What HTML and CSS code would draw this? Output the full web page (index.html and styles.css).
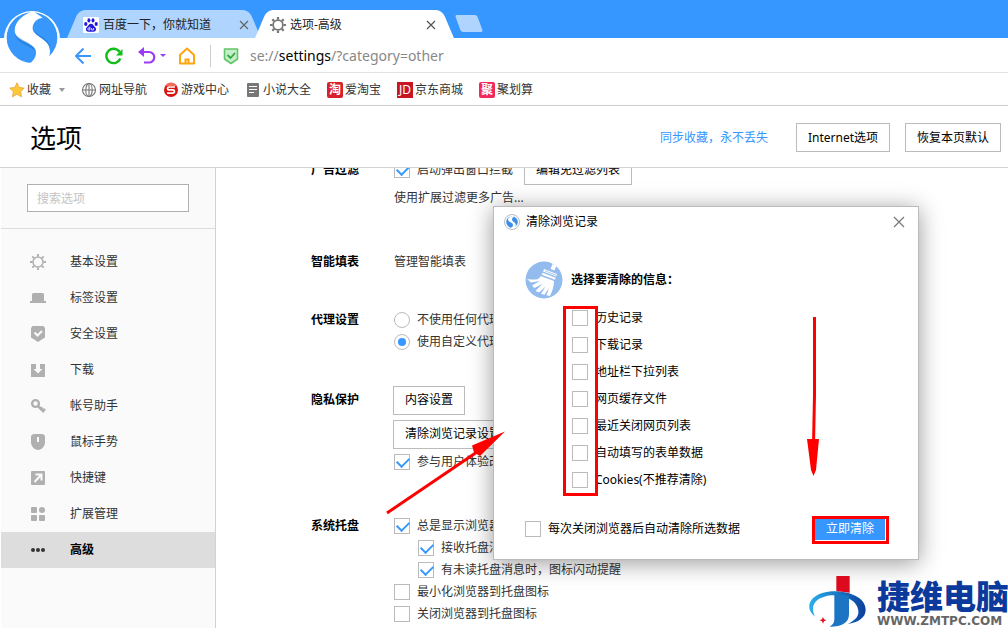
FILE: index.html
```html
<!DOCTYPE html>
<html lang="zh-CN">
<head>
<meta charset="utf-8">
<title>选项-高级</title>
<link rel="stylesheet" href="styles.css">
</head>
<body>
<div class="browser">
  <header class="chrome">
    <svg class="brand" width="64" height="64" viewBox="0 0 192 192" aria-hidden="true">
      <circle cx="96" cy="93" r="84" fill="#fff"/>
      <circle cx="96" cy="89" r="76" fill="#3797fa"/>
      <path d="M100 10C70 18 44 42 44 68c0 36 64 34 64 66 0 14-10 28-26 36h50c13-10 18-26 18-42 0-36-52-42-52-68 0-17 14-29 30-31z" fill="#fff"/>
      <path d="M44 68c0 30 64 32 64 66 0-18-66-22-64-66M98 60c0 26 52 32 52 68 6-40-46-44-52-68" fill="#1c74cf" opacity=".55"/>
    </svg>
    <div class="tabs">
      <div class="tab tab-back">
        <svg width="16" height="16" viewBox="0 0 16 16"><rect width="16" height="16" rx="1" fill="#fff"/><g fill="#2319dc"><ellipse cx="2.8" cy="7" rx="1.6" ry="2.1"/><ellipse cx="5.9" cy="3.4" rx="1.5" ry="2.1"/><ellipse cx="10" cy="3.4" rx="1.5" ry="2.1"/><ellipse cx="13.2" cy="7" rx="1.6" ry="2.1"/><path d="M8 6.8c2 0 2.6 2 4 3.3 1.8 1.6 1.300 4.600-1.200 4.600H5.200c-2.500 0-3-3-1.200-4.600C5.400 8.800 6 6.800 8 6.800z"/></g><path d="M6.900 9.800v3.200H5.700a1 1 0 0 1 0-2h1.200M8.600 11v2h2v-2" stroke="#fff" stroke-width=".8" fill="none"/></svg>
        <span class="tab-name">百度一下，你就知道</span>
        <button class="x-btn" aria-label="关闭标签"><svg width="10" height="10" viewBox="0 0 10 10"><path d="M1 1l8 8M9 1L1 9" stroke="#666" stroke-width="1.200"/></svg></button>
      </div>
      <div class="tab tab-front">
        <svg width="16" height="16" viewBox="0 0 16 16" fill="none" stroke="#777"><circle cx="8" cy="8" r="4.900" stroke-width="1.800"/><path d="M8 0v2.500M8 13.500V16M0 8h2.500M13.500 8H16M2.300 2.300l1.800 1.800M11.900 11.900l1.800 1.800M2.300 13.700l1.800-1.800M11.900 4.100l1.800-1.800" stroke-width="2.200"/></svg>
        <span class="tab-name">选项-高级</span>
        <button class="x-btn" aria-label="关闭标签"><svg width="10" height="10" viewBox="0 0 10 10"><path d="M1 1l8 8M9 1L1 9" stroke="#555" stroke-width="1.200"/></svg></button>
      </div>
      <button class="new-tab" aria-label="新建标签"></button>
    </div>
    <nav class="toolbar">
      <button class="tool" aria-label="后退"><svg width="18" height="18" viewBox="0 0 18 18" fill="none" stroke="#3a96fb" stroke-width="2"><path d="M17 9H2.500M9.500 1.500L2 9l7.500 7.500"/></svg></button>
      <button class="tool" aria-label="刷新"><svg width="20" height="18" viewBox="0 0 20 18" fill="none"><path d="M16.300 11.500A7.200 7.200 0 1 1 15.600 5" stroke="#12bd1c" stroke-width="2.400"/><path d="M18.500 2v6.500H12z" fill="#12bd1c"/></svg></button>
      <button class="tool tool-undo" aria-label="撤销"><svg width="28" height="18" viewBox="0 0 28 18"><path d="M4 5h7a5 5 0 0 1 0 10.500H6" fill="none" stroke="#9b3bf2" stroke-width="2.200"/><path d="M0 5l6-5v10z" fill="#9b3bf2"/><path d="M22 7h6l-3 3z" fill="#9b3bf2"/></svg></button>
      <button class="tool" aria-label="主页"><svg width="18" height="18" viewBox="0 0 18 18" fill="none" stroke="#ffa60f" stroke-width="2"><path d="M2 16.500V8L9 1.500 16 8v8.500z" stroke-linejoin="round"/><path d="M7.500 16v-3.500h3V16"/></svg></button>
      <span class="divider"></span>
      <svg width="16" height="18" viewBox="0 0 16 18"><path d="M1.500 2h13v10L8 16.500 1.500 12z" fill="#c4efc8" stroke="#62c56a" stroke-width="1.600" stroke-linejoin="round"/><path d="M4.500 8l3 3 4.500-5" fill="none" stroke="#2fa844" stroke-width="1.800"/></svg>
      <span class="url">se://<b>settings</b>/?category=other</span>
    </nav>
    <nav class="bookmarks">
      <a class="mark" href="#"><svg width="16" height="16" viewBox="0 0 16 16"><path d="M8 .8l2.200 4.700 5.100.6-3.700 3.600.9 5.100L8 12.300l-4.500 2.500.9-5.100L.7 6.100l5.100-.6z" fill="#ffc83a" stroke="#e3a33a" stroke-width=".8"/></svg>收藏<svg class="drop" width="6" height="4" viewBox="0 0 6 4"><path d="M0 0h6L3 4z" fill="#999"/></svg></a>
      <a class="mark" href="#"><svg width="16" height="16" viewBox="0 0 16 16" fill="none" stroke="#777" stroke-width="1.100"><circle cx="8" cy="8" r="6.500"/><ellipse cx="8" cy="8" rx="3.200" ry="6.500"/><path d="M8 1.300v13.400M1.300 8h13.400"/></svg>网址导航</a>
      <a class="mark" href="#"><svg width="16" height="16" viewBox="0 0 16 16"><circle cx="8" cy="8" r="7" fill="#d8150f"/><path d="M2 4a7 7 0 0 1 12 0" fill="#f26a5a"/><path d="M12 5H6.500c-2.600 0-2.600 2.900 0 2.900h3c2.600 0 2.600 3.200 0 3.200H4" fill="none" stroke="#fff" stroke-width="1.700"/></svg>游戏中心</a>
      <a class="mark" href="#"><svg width="16" height="16" viewBox="0 0 16 16"><rect x="2" y="1" width="12" height="14" rx="1" fill="#777"/><path d="M4 4.500h8M4 7.500h8M4 10.500h5" stroke="#fff" stroke-width="1.200"/></svg>小说大全</a>
      <a class="mark" href="#"><span class="site site-tao">淘</span>爱淘宝</a>
      <a class="mark" href="#"><span class="site site-jd">JD</span>京东商城</a>
      <a class="mark" href="#"><span class="site site-ju">聚</span>聚划算</a>
    </nav>
  </header>

  <header class="page-head">
    <h1>选项</h1>
    <a class="sync" href="#">同步收藏，永不丢失</a>
    <button class="btn">Internet选项</button>
    <button class="btn">恢复本页默认</button>
  </header>

  <div class="page">
    <aside class="side">
      <div class="search"><input type="text" placeholder="搜索选项" aria-label="搜索选项"></div>
      <nav class="menu">
        <a href="#"><svg width="16" height="16" viewBox="0 0 16 16" fill="none" stroke="#b0b0b0"><circle cx="8" cy="8" r="5" stroke-width="1.500"/><path d="M8 0v2.500M8 13.500V16M0 8h2.500M13.500 8H16M2.300 2.300l1.800 1.800M11.900 11.900l1.800 1.800M2.300 13.700l1.800-1.800M11.900 4.100l1.800-1.800" stroke-width="1.900"/></svg>基本设置</a>
        <a href="#"><svg width="16" height="16" viewBox="0 0 16 16" fill="#b0b0b0"><path d="M2 11V4.500Q2 3 3.500 3h9Q14 3 14 4.500V11h2v2H0v-2z"/></svg>标签设置</a>
        <a href="#"><svg width="16" height="16" viewBox="0 0 16 16"><path d="M1 2l1.500-2h11L15 2v9.500L8 16l-7-4.500z" fill="#b0b0b0"/><path d="M4.500 6.500l3 3 4.500-4.500" fill="none" stroke="#fafafa" stroke-width="2"/></svg>安全设置</a>
        <a href="#"><svg width="16" height="16" viewBox="0 0 16 16" fill="#b0b0b0"><path d="M1 2h5v5H3.500L8 11.500 12.500 7H10V2h5v13H1z"/></svg>下载</a>
        <a href="#"><svg width="16" height="16" viewBox="0 0 16 16"><circle cx="5.500" cy="5.500" r="3.400" fill="none" stroke="#b0b0b0" stroke-width="2.400"/><path d="M8 8l6 6M11 11l1.500-1.500M13 13l2-2" stroke="#b0b0b0" stroke-width="2.600"/></svg>帐号助手</a>
        <a href="#"><svg width="16" height="16" viewBox="0 0 16 16"><path d="M1 3Q1 0 4.500 0h7Q15 0 15 3v5c0 4-3 8-7 8s-7-4-7-8z" fill="#b0b0b0"/><path d="M8 3v5" stroke="#fafafa" stroke-width="2"/></svg>鼠标手势</a>
        <a href="#"><svg width="16" height="16" viewBox="0 0 16 16"><rect x="1" y="1" width="14" height="14" rx="1" fill="#b0b0b0"/><path d="M5.500 4.500h6v6M11.500 4.500L4.500 12" fill="none" stroke="#fafafa" stroke-width="2"/></svg>快捷键</a>
        <a href="#"><svg width="16" height="16" viewBox="0 0 16 16" fill="#b0b0b0"><rect x="1" y="1" width="6" height="6" rx="1"/><circle cx="12" cy="4" r="3"/><rect x="1" y="9" width="6" height="6" rx="1"/><rect x="9" y="9" width="6" height="6" rx="1"/></svg>扩展管理</a>
        <a class="current" href="#"><svg width="16" height="16" viewBox="0 0 16 16" fill="#333"><circle cx="3" cy="8" r="2"/><circle cx="8" cy="8" r="2"/><circle cx="13" cy="8" r="2"/></svg>高级</a>
      </nav>
    </aside>

    <main class="content">
      <div class="scrolled">
        <section class="group">
          <h2 class="tall">广告过滤</h2>
          <div>
            <div class="row tall"><label class="opt inset"><input type="checkbox" checked>启动弹出窗口拦截</label><button class="btn">编辑免过滤列表</button></div>
            <a class="row" href="#">使用扩展过滤更多广告...</a>
          </div>
        </section>
        <section class="group group-near">
          <h2>智能填表</h2>
          <div><a class="row" href="#">管理智能填表</a></div>
        </section>
        <section class="group group-close">
          <h2>代理设置</h2>
          <div>
            <label class="opt row"><input type="radio" name="proxy">不使用任何代理</label>
            <label class="opt row"><input type="radio" name="proxy" checked>使用自定义代理</label>
          </div>
        </section>
        <section class="group">
          <h2 class="tall">隐私保护</h2>
          <div>
            <div class="row tall"><button class="btn">内容设置</button></div>
            <div class="row tall"><button class="btn">清除浏览记录设置</button></div>
            <label class="opt row"><input type="checkbox" checked>参与用户体验改善计划</label>
          </div>
        </section>
        <section class="group">
          <h2>系统托盘</h2>
          <div>
            <label class="opt row"><input type="checkbox" checked>总是显示浏览器托盘图标</label>
            <label class="opt row nested"><input type="checkbox" checked>接收托盘消息</label>
            <label class="opt row nested"><input type="checkbox" checked>有未读托盘消息时，图标闪动提醒</label>
            <label class="opt row"><input type="checkbox">最小化浏览器到托盘图标</label>
            <label class="opt row"><input type="checkbox">关闭浏览器到托盘图标</label>
          </div>
        </section>
      </div>
    </main>
  </div>

  <section class="dialog" role="dialog" aria-labelledby="dlg-name">
    <div class="dlg-bar">
      <svg width="16" height="16" viewBox="0 0 16 16"><circle cx="8" cy="8" r="7.500" fill="#fff" stroke="#b9bcc2"/><circle cx="8" cy="8" r="5.800" fill="#3b8ee8"/><path d="M8.500 2C5.500 2.500 4 4 4 5.600 4 8.500 9 8.300 9 11c0 1.200-.8 2.200-2 3h3.300c1-.8 1.500-2 1.500-3.200C11.800 8 8 7.500 8 5.400 8 4 9 3.200 10.300 3z" fill="#fff"/></svg>
      <span id="dlg-name">清除浏览记录</span>
      <button class="x-btn" aria-label="关闭"><svg width="12" height="12" viewBox="0 0 12 12"><path d="M1 1l10 10M11 1L1 11" stroke="#777" stroke-width="1.200"/></svg></button>
    </div>
    <div class="dlg-head">
      <svg width="38" height="38" viewBox="0 0 38 38"><circle cx="19" cy="19" r="18.500" fill="#93bbee"/><g fill="#fff"><path d="M27.500 3l4 1.500-2 5-4-1.500z"/><path d="M19 8l13 5-.8 2.600-13.200-5zM17.500 11.800l13.200 5-.7 2-13.200-5z"/><path d="M15.500 15l13.500 5c0 5-1.500 10-4 15l-3.500-.8 2.500-7.200-4.500 6.800-3.500-1 4.500-7.300-6.500 5.900-3.500-1.500 7-7.200-8 4.300-2.500-2.500 8-4.600-9 1.500-4-3.500c6 1 12.500 1.500 13.500-2.900z"/></g><path d="M20 9.900l11 4.200" stroke="#93bbee" stroke-width=".8"/></svg>
      <b>选择要清除的信息：</b>
    </div>
    <div class="choices">
      <label class="opt"><input type="checkbox">历史记录</label>
      <label class="opt"><input type="checkbox">下载记录</label>
      <label class="opt"><input type="checkbox">地址栏下拉列表</label>
      <label class="opt"><input type="checkbox">网页缓存文件</label>
      <label class="opt"><input type="checkbox">最近关闭网页列表</label>
      <label class="opt"><input type="checkbox">自动填写的表单数据</label>
      <label class="opt"><input type="checkbox">Cookies(不推荐清除)</label>
    </div>
    <div class="dlg-foot">
      <label class="opt"><input type="checkbox">每次关闭浏览器后自动清除所选数据</label>
      <button class="primary">立即清除</button>
    </div>
  </section>

  <svg class="notes" width="1008" height="628" viewBox="0 0 1008 628" aria-hidden="true">
    <g fill="none" stroke="#f00" stroke-width="3"><rect x="564.500" y="307.500" width="32" height="187"/><rect x="813.500" y="517.500" width="74" height="25"/><path d="M387 513l90-61M814.500 317v78l-1 50"/></g>
    <path d="M505 431.500L472 445.500l2 7 6 3.500zM807 439h12l-3 31-2.500 6-2.500-6z" fill="#f00"/>
  </svg>

  <div class="watermark">
    <svg width="64" height="54" viewBox="0 0 192 162">
      <defs><linearGradient id="sea" x1="0" x2="1"><stop offset="0" stop-color="#2ab0ea"/><stop offset="1" stop-color="#0b3f9e"/></linearGradient></defs>
      <path d="M24 128C-6 104 4 70 46 57c50-15 130 4 130 50 0 24-22 38-54 43 24-12 34-24 32-40C150 72 92 56 52 68 16 78 12 104 24 128z" fill="url(#sea)"/>
      <path d="M82 62l44 2v56c0 26-20 38-58 38 10-6 14-12 14-22z" fill="#1b75c4"/>
      <path d="M88 6h40v50l-40-5z" fill="#dc0a1c"/>
      <path d="M48 129l3 7 7 3-7 3-3 7-3-7-7-3 7-3z" fill="#e01020"/>
    </svg>
    <div><strong>捷维电脑</strong><span>WWW.ZMTPC.COM</span></div>
  </div>
</div>
</body>
</html>
```

FILE: styles.css
```css
* { box-sizing: border-box; }

body {
  margin: 0;
  font: 12px/22px "Noto Sans", "Noto Sans CJK SC", sans-serif;
  color: #333;
  background: #fff;
}

a { color: inherit; text-decoration: none; }
svg { flex: none; }
button, input { font: inherit; color: inherit; margin: 0; }
button { cursor: pointer; }

.browser {
  position: relative;
  display: flex;
  flex-direction: column;
  height: 100vh;
  overflow: hidden;
}

/* Browser frame */
.chrome { flex: none; }
.brand { position: absolute; left: 0; top: 8px; z-index: 2; }

.tabs {
  display: flex;
  align-items: flex-end;
  height: 38px;
  padding-left: 67px;
  background: #3597ff;
}
.tab {
  position: relative;
  z-index: 0;
  display: flex;
  align-items: center;
  gap: 4px;
  flex: 0 1 194px;
  height: 28px;
  padding: 2px 12px 0 16px;
  color: #222;
}
.tab::before, .tab::after {
  content: "";
  position: absolute;
  z-index: -1;
  top: 0;
  bottom: 0;
  background: #afd5ff;
}
.tab::before { left: 6px; right: 40%; transform: skewX(-23deg); border-top-left-radius: 6px; }
.tab::after { right: 6px; left: 40%; transform: skewX(23deg); border-top-right-radius: 6px; }
.tab-front { flex-basis: 199px; margin-left: -6px; padding: 2px 18px 0 15px; }
.tab-front::before, .tab-front::after { background: #fff; }
.tab-name { flex: 1; white-space: nowrap; }
.x-btn { display: flex; padding: 0; border: 0; background: none; }
.new-tab {
  width: 22px;
  height: 17px;
  margin: 0 0 6px 4px;
  padding: 0;
  border: 0;
  border-radius: 2px;
  background: #afd5ff;
  transform: skewX(20deg);
}

.toolbar {
  display: flex;
  align-items: center;
  height: 35px;
  padding: 2px 0 0 74px;
  border-bottom: 1px solid #e2e2e2;
}
.tool { display: flex; margin-right: 12px; padding: 0; border: 0; background: none; }
.tool-undo { margin-left: 2px; }
.divider { width: 1px; height: 22px; margin: 0 12px 0 2px; background: #ccc; }
.url { margin-left: 11px; font-size: 14px; color: #888; }
.url b { font-weight: 400; color: #000; }

.bookmarks {
  display: flex;
  align-items: center;
  gap: 16px;
  height: 33px;
  padding: 1px 0 0 9px;
  border-bottom: 1px solid #ccc;
}
.mark { display: flex; align-items: center; gap: 2px; white-space: nowrap; }
.drop { margin-left: 6px; }
.site {
  width: 16px;
  height: 16px;
  border-radius: 2px;
  font-weight: 700;
  line-height: 16px;
  text-align: center;
  color: #fff;
}
.site-tao { background: #d8202a; }
.site-jd { background: #c81623; border-radius: 0; font-weight: 400; }
.site-ju { background: #f22a5c; }

/* Settings page */
.page-head {
  display: flex;
  align-items: center;
  flex: none;
  height: 62px;
  padding: 2px 7px 0 30px;
  border-bottom: 1px solid #d2d2d2;
}
.page-head h1 { flex: 1; margin: 0; font-size: 26px; font-weight: 400; line-height: 40px; color: #000; }
.page-head .btn { margin-left: 15px; }
.sync { margin-right: 13px; color: #3597ff; }

.btn {
  height: 29px;
  padding: 0 11px;
  border: 1px solid #bbb;
  background: #fff;
  line-height: 20px;
  color: #000;
  white-space: nowrap;
}

.page { display: flex; flex: 1; min-height: 0; }
.side {
  flex: none;
  width: 215px;
  margin-left: 1px;
  background: #fafafa;
  border-right: 1px solid #d2d2d2;
}
.search { padding: 16px 26px; border-bottom: 1px solid #ddd; }
.search input {
  display: block;
  width: 100%;
  height: 28px;
  padding: 0 9px;
  border: 1px solid #b1b1b1;
  background: #fff;
}
.search input::placeholder { color: #c4c4c4; }
.menu { padding-top: 15px; }
.menu a { display: flex; align-items: center; gap: 24px; height: 36px; padding-left: 29px; }
.menu .current { background: #ddd; font-weight: 700; color: #000; }

.content { flex: 1; min-width: 0; overflow: hidden; }
.scrolled { margin-top: -15px; padding-left: 95px; }
.group { display: grid; grid-template-columns: 82px 1fr; margin-bottom: 42px; }
.group-near { margin-bottom: 36px; }
.group-close { margin-bottom: 30px; }
.group h2 { margin: 0; font-size: 12px; line-height: 22px; color: #000; }
.group h2.tall { line-height: 34px; }
.row { display: flex; align-items: center; gap: 11px; height: 22px; padding-left: 1px; white-space: nowrap; }
.row.tall { height: 34px; padding-left: 0; }
.row.nested { padding-left: 25px; }

.opt, .opt.row { display: flex; align-items: center; gap: 7px; white-space: nowrap; }
.opt.inset { padding-left: 1px; }
.opt input {
  position: relative;
  flex: none;
  width: 16px;
  height: 16px;
  appearance: none;
  border: 1px solid #bbb;
  background: #fff;
}
.opt input[type="radio"] { border-radius: 50%; }
.opt input[type="checkbox"]:checked::after {
  content: "";
  position: absolute;
  left: 2px;
  top: 2px;
  width: 10px;
  height: 6px;
  border: solid #3597ff;
  border-width: 0 0 2px 2px;
  transform: rotate(-45deg);
}
.opt input[type="radio"]:checked::after {
  content: "";
  position: absolute;
  inset: 3px;
  border-radius: 50%;
  background: #3597ff;
}

/* Clear-history dialog */
.dialog {
  position: absolute;
  left: 493px;
  top: 206px;
  width: 426px;
  border: 1px solid #bbb;
  background: #fff;
  color: #000;
  box-shadow: 0 3px 22px rgba(0, 0, 0, .4);
}
.dlg-bar { display: flex; align-items: center; gap: 6px; height: 30px; padding: 0 13px 0 10px; }
.dlg-bar span { flex: 1; }
.dlg-head { display: flex; align-items: center; gap: 8px; padding: 24px 31px 5px; }
.choices { padding-left: 78px; }
.choices .opt { height: 27px; }
.dlg-foot {
  display: flex;
  align-items: center;
  justify-content: space-between;
  padding: 25px 33px 19px 31px;
}
.primary {
  height: 22px;
  padding: 0 11px;
  border: 0;
  background: #3597ff;
  color: #fff;
  line-height: 22px;
}

/* Callouts and site mark */
.notes { position: absolute; left: 0; top: 0; pointer-events: none; }
.watermark {
  position: absolute;
  right: 0;
  bottom: 0;
  display: flex;
  width: 201px;
  height: 54px;
  gap: 6px;
}
.watermark strong {
  display: block;
  font: 900 33px/38px "Noto Sans CJK SC", sans-serif;
  color: #0b3a9c;
  white-space: nowrap;
}
.watermark div { padding-top: 2px; }
.watermark span { display: block; font: 700 12px/14px "DejaVu Sans", sans-serif; color: #666; }
```
